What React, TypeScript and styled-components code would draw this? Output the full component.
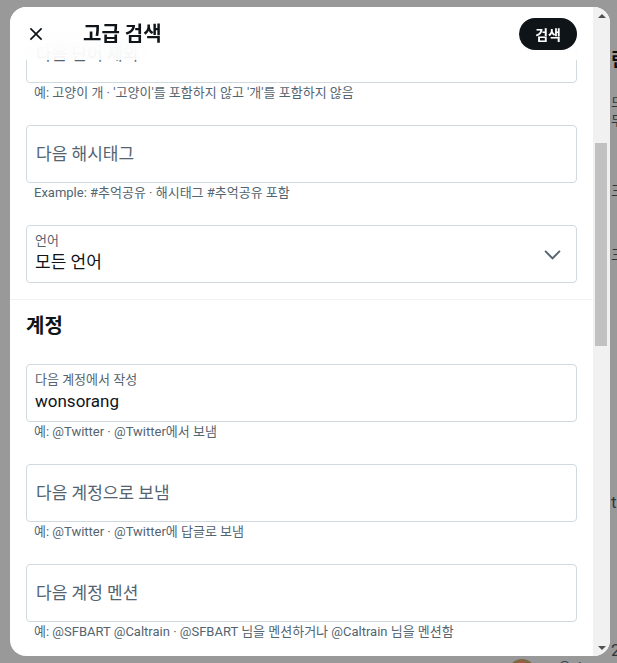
import React from "react";
import styled, { createGlobalStyle } from "styled-components";

const FONT = `Roboto, "Noto Sans CJK KR", "Noto Sans", sans-serif`;

const GlobalStyle = createGlobalStyle`
  html, body {
    margin: 0;
    padding: 0;
  }

  body {
    background: #999999;
    font-family: ${FONT};
    overflow: hidden;
  }
`;

type FieldData = {
  label: string;
  value?: string;
  helper?: string;
};

const Page = styled.div`
  width: 617px;
  height: 663px;
  box-sizing: border-box;
  padding: 7px 0 0 10px;
  display: flex;
  flex-direction: column;
  overflow: hidden;
`;

const Stage = styled.div`
  display: flex;
`;

const Modal = styled.div`
  flex-shrink: 0;
  display: flex;
  width: 600px;
  height: 649px;
  background: #ffffff;
  border-radius: 16px;
  overflow: hidden;
`;

const ScrollArea = styled.div`
  position: relative;
  flex: 1;
  overflow: hidden;
`;

const Header = styled.div`
  position: absolute;
  top: 0;
  left: 0;
  right: 0;
  z-index: 2;
  height: 53px;
  box-sizing: border-box;
  display: flex;
  align-items: center;
  padding: 0 16px;
  background: rgba(255, 255, 255, 0.86);
  backdrop-filter: blur(12px);
`;

const CloseCol = styled.div`
  display: flex;
  align-items: center;
  width: 57px;
`;

const CloseButton = styled.div`
  display: flex;
  align-items: center;
  justify-content: center;
  width: 36px;
  height: 36px;
  margin-left: -8px;
  border-radius: 50%;
  color: #0f1419;
`;

const Title = styled.h2`
  margin: 0;
  font-size: 20px;
  line-height: 24px;
  font-weight: 700;
  color: #0f1419;
`;

const SearchButton = styled.button`
  margin-left: auto;
  height: 32px;
  padding: 0 16px;
  border: none;
  border-radius: 9999px;
  background: #0f1419;
  color: #ffffff;
  font-family: ${FONT};
  font-size: 14px;
  font-weight: 700;
`;

const Body = styled.div`
  padding-top: 6px;
`;

const Section = styled.div`
  padding-bottom: 4px;
  border-bottom: 1px solid #eff3f4;
`;

const SectionTitle = styled.h3`
  margin: 0;
  padding: 14px 16px;
  font-size: 20px;
  line-height: 24px;
  font-weight: 700;
  color: #0f1419;
`;

const Field = styled.div`
  padding: 12px 16px;
`;

const Box = styled.div`
  height: 58px;
  box-sizing: border-box;
  display: flex;
  align-items: center;
  padding: 0 12px 0 8px;
  border: 1px solid #cfd9de;
  border-radius: 4px;
`;

const BoxText = styled.div<{ $filled: boolean }>`
  flex: 1;
  display: flex;
  flex-direction: column;
  align-self: ${({ $filled }) => ($filled ? "flex-start" : "center")};
  padding-top: ${({ $filled }) => ($filled ? "7px" : "0")};
`;

const Label = styled.span`
  font-size: 13px;
  line-height: 16px;
  color: #536471;
`;

const Placeholder = styled.span`
  padding-left: 1px;
  font-size: 17px;
  line-height: 24px;
  color: #536471;
`;

const Value = styled.span`
  padding-top: 1px;
  font-size: 17px;
  line-height: 24px;
  color: #0f1419;
`;

const Helper = styled.div`
  padding: 2px 8px 0;
  font-size: 13px;
  line-height: 16px;
  color: #536471;
  white-space: nowrap;
`;

const Chevron = styled.svg`
  width: 23px;
  height: 23px;
  fill: #536471;
`;

const Scrollbar = styled.div`
  display: flex;
  flex-direction: column;
  width: 17px;
  background: #f1f1f1;
`;

const ArrowButton = styled.div<{ $down?: boolean }>`
  display: flex;
  align-items: center;
  justify-content: center;
  height: 17px;

  &::after {
    content: "";
    border-left: 4px solid transparent;
    border-right: 4px solid transparent;
    ${({ $down }) =>
      $down ? "border-top: 4px solid #505050;" : "border-bottom: 4px solid #505050;"}
  }
`;

const Thumb = styled.div<{ $top: number; $size: number }>`
  margin: ${({ $top }) => $top}px 3px 0 2px;
  height: ${({ $size }) => $size}px;
  background: #c1c1c1;
`;

const Spacer = styled.div`
  flex: 1;
`;

const SideStrip = styled.div`
  flex: 1;
  display: flex;
  flex-direction: column;
  padding-left: 1px;
  overflow: hidden;
  white-space: nowrap;
`;

const SideLine = styled.div<{ $gap: number; $size?: number; $bold?: boolean }>`
  margin-top: ${({ $gap }) => $gap}px;
  font-size: ${({ $size }) => $size ?? 13}px;
  line-height: 18px;
  font-weight: ${({ $bold }) => ($bold ? 700 : 400)};
  color: ${({ $bold }) => ($bold ? "#0a0c0e" : "#31363b")};
`;

const BottomStrip = styled.div`
  display: flex;
  align-items: flex-start;
  gap: 22px;
  height: 7px;
  padding-left: 498px;
  overflow: hidden;
`;

const Avatar = styled.div`
  width: 28px;
  height: 28px;
  border-radius: 50%;
  background: radial-gradient(circle at 50% 30%, #a7564b 0 25%, #7d6a45 26% 55%, #8d8a7a 56%);
`;

const Handle = styled.span`
  margin-top: 1px;
  font-size: 14px;
  line-height: 14px;
  color: #3d4349;
`;

const CloseIcon = () => (
  <svg viewBox="0 0 24 24" width="20" height="20" fill="currentColor">
    <path d="M10.59 12L4.54 5.96l1.42-1.42L12 10.59l6.04-6.05 1.42 1.42L13.41 12l6.05 6.04-1.42 1.42L12 13.41l-6.04 6.05-1.42-1.42L10.59 12z" />
  </svg>
);

const InputField: React.FC<FieldData> = ({ label, value, helper }) => {
  const filled = Boolean(value);
  return (
    <Field>
      <Box>
        <BoxText $filled={filled}>
          {filled ? (
            <>
              <Label>{label}</Label>
              <Value>{value}</Value>
            </>
          ) : (
            <Placeholder>{label}</Placeholder>
          )}
        </BoxText>
      </Box>
      {helper && <Helper>{helper}</Helper>}
    </Field>
  );
};

const accountFields: FieldData[] = [
  {
    label: "다음 계정에서 작성",
    value: "wonsorang",
    helper: "예: @Twitter · @Twitter에서 보냄",
  },
  {
    label: "다음 계정으로 보냄",
    helper: "예: @Twitter · @Twitter에 답글로 보냄",
  },
  {
    label: "다음 계정 멘션",
    helper: "예: @SFBART @Caltrain · @SFBART 님을 멘션하거나 @Caltrain 님을 멘션함",
  },
];

export default function App() {
  return (
    <>
      <GlobalStyle />
      <Page>
        <Stage>
          <Modal>
            <ScrollArea>
              <Header>
                <CloseCol>
                  <CloseButton>
                    <CloseIcon />
                  </CloseButton>
                </CloseCol>
                <Title>고급 검색</Title>
                <SearchButton>검색</SearchButton>
              </Header>

              <Body>
                <Section>
                  <InputField
                    label="다음 단어 제외"
                    helper="예: 고양이 개 · '고양이'를 포함하지 않고 '개'를 포함하지 않음"
                  />
                  <InputField
                    label="다음 해시태그"
                    helper="Example: #추억공유 · 해시태그 #추억공유 포함"
                  />
                  <Field>
                    <Box>
                      <BoxText $filled>
                        <Label>언어</Label>
                        <Value>모든 언어</Value>
                      </BoxText>
                      <Chevron viewBox="0 0 24 24">
                        <path d="M3.543 8.96l1.414-1.42L12 14.59l7.043-7.05 1.414 1.42L12 17.41 3.543 8.96z" />
                      </Chevron>
                    </Box>
                  </Field>
                </Section>

                <SectionTitle>계정</SectionTitle>
                {accountFields.map((field) => (
                  <InputField key={field.label} {...field} />
                ))}
              </Body>
            </ScrollArea>

            <Scrollbar>
              <ArrowButton />
              <Thumb $top={119} $size={203} />
              <Spacer />
              <ArrowButton $down />
            </Scrollbar>
          </Modal>

          <SideStrip>
            <SideLine $gap={44} $size={18} $bold>
              린
            </SideLine>
            <SideLine $gap={25}>드</SideLine>
            <SideLine $gap={0}>무</SideLine>
            <SideLine $gap={52}>三</SideLine>
            <SideLine $gap={46}>三</SideLine>
            <SideLine $gap={229} $size={17}>
              t
            </SideLine>
            <SideLine $gap={130} $size={17}>
              2
            </SideLine>
          </SideStrip>
        </Stage>

        <BottomStrip>
          <Avatar />
          <Handle>@stu</Handle>
        </BottomStrip>
      </Page>
    </>
  );
}
